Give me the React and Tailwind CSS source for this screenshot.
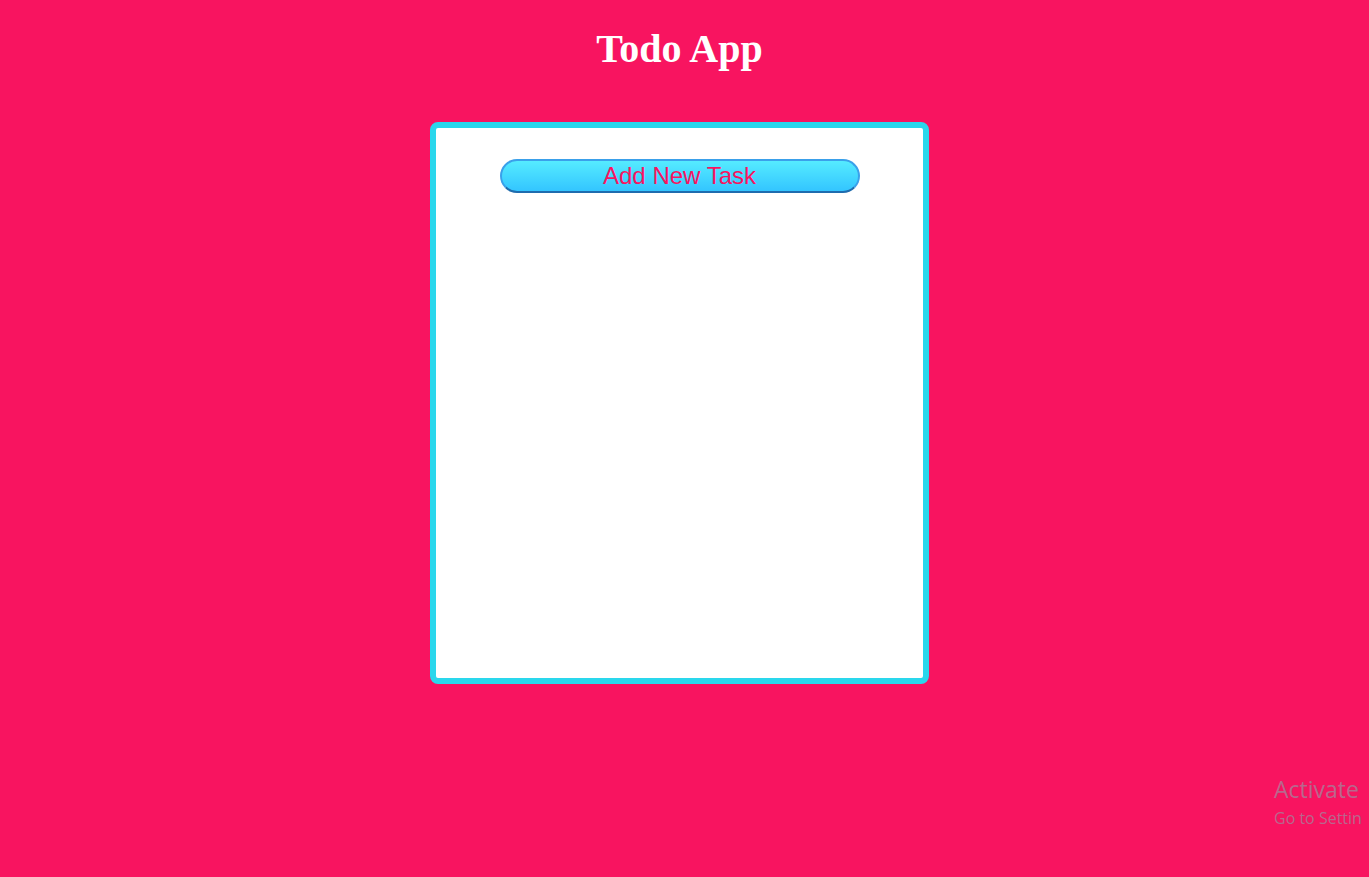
export default function App() {
  return (
    <div className="relative w-full h-[877px] overflow-hidden bg-[#f81460]">
      <div className="flex flex-col items-center pr-[10px]">
        <h1
          className="mt-[26px] text-[40px] leading-[46px] font-bold text-white"
          style={{ fontFamily: '"Liberation Serif", "Times New Roman", serif' }}
        >
          Todo App
        </h1>
        <div className="mt-[50px] w-[499px] h-[562px] rounded-[8px] border-[6px] border-[#2ad7ec] bg-white flex flex-col items-center">
          <button
            className="mt-[31px] w-[360px] h-[34px] rounded-full border-[2px] border-[#3aa0ea] border-b-[#1f6cae] bg-gradient-to-b from-[#55ebff] to-[#33c5ff] text-[#f81460] text-[24px] leading-none flex items-center justify-center"
            style={{ fontFamily: '"Liberation Sans", Arial, sans-serif' }}
          >
            Add New Task
          </button>
        </div>
      </div>
      <div
        className="absolute left-[1274px] top-[774px] whitespace-nowrap text-[#b9678d]"
        style={{ fontFamily: '"Open Sans", "Noto Sans", sans-serif' }}
      >
        <div className="text-[23px] leading-[30px]">Activate</div>
        <div className="text-[16px] leading-[28px]">Go to Settin</div>
      </div>
    </div>
  );
}
